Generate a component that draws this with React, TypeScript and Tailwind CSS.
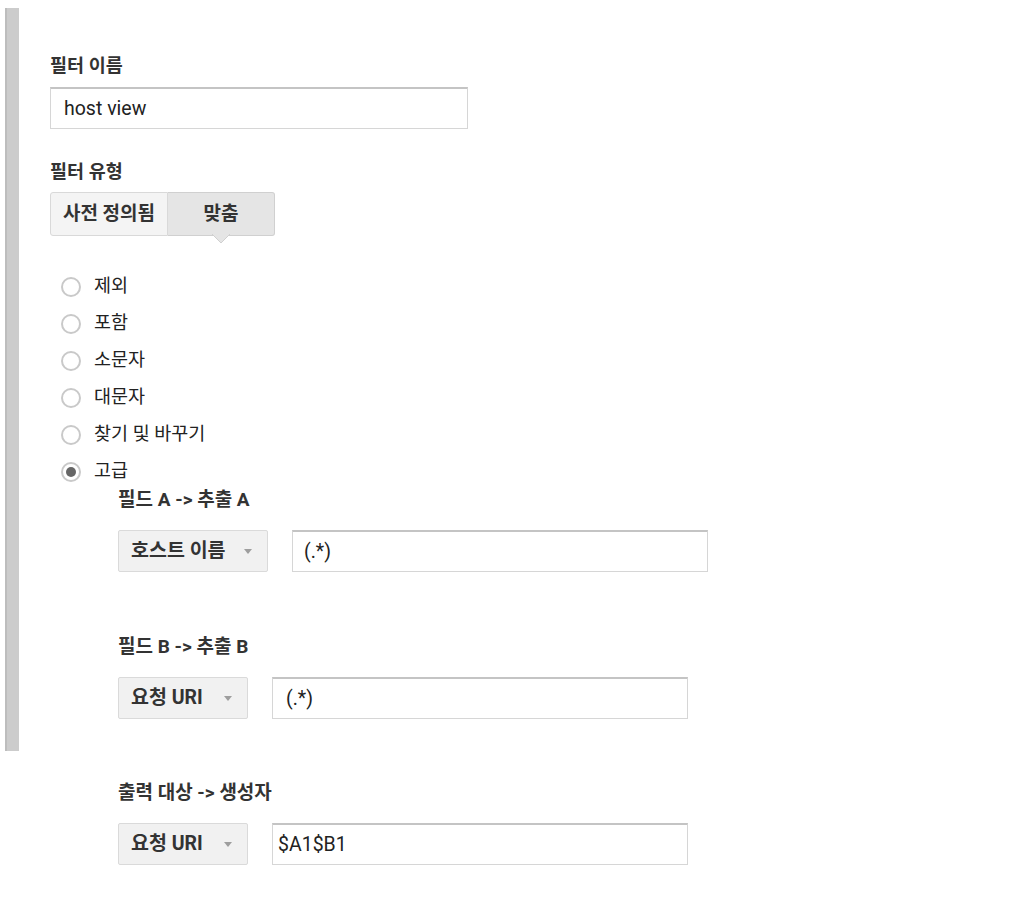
import React from 'react'

const font = { fontFamily: 'Roboto, "Noto Sans CJK KR", sans-serif' }

const radios = ['제외', '포함', '소문자', '대문자', '찾기 및 바꾸기', '고급']

function Caret() {
  return (
    <svg width="8" height="5" viewBox="0 0 8 5" className="shrink-0">
      <path d="M0 0 L8 0 L4 5 Z" fill="#9e9e9e" />
    </svg>
  )
}

function FieldRow({
  label,
  select,
  value,
  selectW,
  valuePad,
}: {
  label: string
  select: string
  value: string
  selectW: string
  valuePad: string
}) {
  return (
    <div>
      <div className="h-5 leading-5 text-[19px] font-bold text-[#333] whitespace-nowrap">{label}</div>
      <div className="mt-5 flex gap-6">
        <div
          className={`${selectW} h-[42px] flex items-center justify-between pl-[12px] pr-[15px] rounded-[2px] border border-[#dadada] bg-[#f1f1f1] text-[19.5px] font-bold text-[#333] whitespace-nowrap`}
        >
          <span>{select}</span>
          <Caret />
        </div>
        <div
          className={`w-[416px] h-[42px] flex items-center ${valuePad} border border-[#d6d6d6] border-t-[#c4c4c4] border-t-2 text-[19.5px] text-[#222]`}
        >
          {value}
        </div>
      </div>
    </div>
  )
}

export default function App() {
  return (
    <div className="min-h-[908px] bg-white pt-2" style={font}>
      <div className="ml-[5px] flex">
        <div className="w-[14px] shrink-0 bg-[#cccccc] border-l-2 border-[#bdbdbd]" />
        <div className="pl-[31px] pb-8">
          <div className="mt-[46px] h-6 leading-6 text-[18.5px] font-bold text-[#333]">필터 이름</div>
          <div className="mt-[9px] w-[418px] h-[42px] flex items-center pl-[13px] border border-[#d6d6d6] border-t-2 border-t-[#c4c4c4] text-[19.5px] text-[#222]">
            host view
          </div>

          <div className="mt-[31px] h-6 leading-6 text-[18.5px] font-bold text-[#333]">필터 유형</div>
          <div className="mt-2 flex">
            <div className="w-[118px] h-[44px] flex items-center justify-center rounded-l-[3px] border border-[#d9d9d9] bg-[#f4f4f4] text-[19px] font-bold text-[#333] whitespace-nowrap">
              사전 정의됨
            </div>
            <div className="relative w-[107px] h-[44px] flex items-center justify-center rounded-r-[3px] border border-l-0 border-[#d0d0d0] bg-[#e5e5e5] text-[19px] font-bold text-[#333]">
              맞춤
              <svg
                width="18"
                height="10"
                viewBox="0 0 18 10"
                className="absolute left-1/2 -translate-x-1/2 top-full -mt-px"
              >
                <path d="M0 0 L18 0 L9 9 Z" fill="#e5e5e5" />
                <path d="M0 0 L9 9 L18 0" fill="none" stroke="#d0d0d0" />
              </svg>
            </div>
          </div>

          <div className="mt-8">
            {radios.map((r, i) => (
              <div key={r} className="h-[37px] flex items-center pl-[11px]">
                <span className="w-5 h-5 rounded-full border-2 border-[#c9c9c9] bg-white flex items-center justify-center">
                  {i === 5 && <span className="w-[10px] h-[10px] rounded-full bg-[#666]" />}
                </span>
                <span className="ml-[13px] text-[18.5px] text-[#222] whitespace-nowrap">{r}</span>
              </div>
            ))}
          </div>

          <div className="ml-[68px]">
            <FieldRow label="필드 A -> 추출 A" select="호스트 이름" value="(.*)" selectW="w-[150px]" valuePad="pl-[11px]" />
            <div className="mt-[65px]">
              <FieldRow label="필드 B -> 추출 B" select="요청 URI" value="(.*)" selectW="w-[130px]" valuePad="pl-[13px]" />
            </div>
          </div>
        </div>
      </div>

      <div className="ml-[118px] mt-8">
        <FieldRow label="출력 대상 -> 생성자" select="요청 URI" value="$A1$B1" selectW="w-[130px]" valuePad="pl-[5px]" />
      </div>
    </div>
  )
}
